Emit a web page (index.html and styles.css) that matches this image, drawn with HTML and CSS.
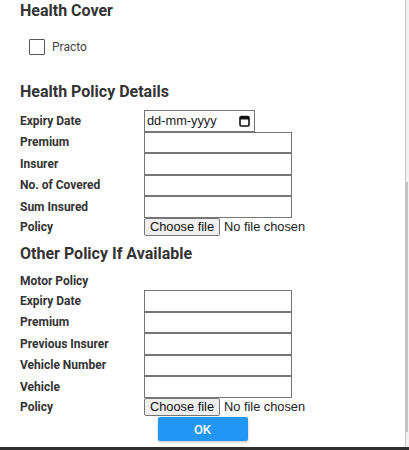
FILE: index.html
```html
<!DOCTYPE html>
<html>
<head>
<meta charset="utf-8">
<link rel="stylesheet" href="styles.css">
</head>
<body>
<div class="window">
  <div class="content">
    <h2 class="title first">Health Cover</h2>
    <label class="check"><input type="checkbox" class="box"><span>Practo</span></label>

    <h2 class="title">Health Policy Details</h2>
    <div class="form">
      <span class="lbl">Expiry Date</span>
      <div class="date"><span class="ph">dd-mm-yyyy</span><svg class="cal" width="11" height="12" viewBox="0 0 11 12"><rect x="1" y="1.5" width="9" height="9.5" rx="1.2" fill="none" stroke="#111" stroke-width="1.6"/><rect x="1" y="1.5" width="9" height="3" fill="#111"/></svg></div>
      <span class="lbl">Premium</span><input type="text" class="txt">
      <span class="lbl">Insurer</span><input type="text" class="txt">
      <span class="lbl">No. of Covered</span><input type="text" class="txt">
      <span class="lbl">Sum Insured</span><input type="text" class="txt">
      <span class="lbl">Policy</span>
      <div class="file"><span class="choose">Choose file</span><span class="nofile">No file chosen</span></div>
    </div>

    <h2 class="title">Other Policy If Available</h2>
    <div class="form">
      <span class="lbl full">Motor Policy</span>
      <span class="lbl">Expiry Date</span><input type="text" class="txt">
      <span class="lbl">Premium</span><input type="text" class="txt">
      <span class="lbl">Previous Insurer</span><input type="text" class="txt">
      <span class="lbl">Vehicle Number</span><input type="text" class="txt">
      <span class="lbl">Vehicle</span><input type="text" class="txt">
      <span class="lbl">Policy</span>
      <div class="file"><span class="choose">Choose file</span><span class="nofile">No file chosen</span></div>
    </div>

    <div class="actions"><button class="ok">OK</button></div>
  </div>
  <div class="scrollbar"><div class="thumb"></div></div>
</div>
<div class="strip"></div>
</body>
</html>
```
FILE: styles.css
```css
html, body {
  margin: 0;
  padding: 0;
  background: #ffffff;
}
body {
  font-family: Roboto, "Liberation Sans", sans-serif;
  color: #333333;
  width: 409px;
  height: 450px;
  overflow: hidden;
}
.window {
  display: flex;
  height: 447px;
  background: #ffffff;
}
.content {
  width: 405px;
  box-sizing: border-box;
  padding: 0 0 0 20px;
}
.title {
  font-size: 16px;
  font-weight: 700;
  line-height: 20px;
  margin: 0;
  color: #333333;
}
.title.first {
  margin-top: 1px;
}
.check {
  display: flex;
  align-items: center;
  margin: 18px 0 0 9px;
  font-size: 12px;
  color: #444444;
  height: 16px;
}
.box {
  appearance: none;
  -webkit-appearance: none;
  width: 16px;
  height: 16px;
  margin: 0 7px 0 0;
  border: 1px solid #555555;
  border-radius: 1px;
  box-sizing: border-box;
  background: #fff;
}
.check + .title {
  margin-top: 27px;
}
.form {
  display: grid;
  grid-template-columns: 124px auto;
  align-items: center;
  margin-top: 8px;
}
.lbl {
  font-size: 12px;
  font-weight: 700;
  color: #333333;
}
.lbl.full {
  grid-column: 1 / 3;
  height: 18px;
  line-height: 18px;
}
.txt, .date {
  font-family: "Liberation Sans", Arial, sans-serif;
  font-size: 12.8px;
  box-sizing: border-box;
  height: 21.5px;
  margin: 0;
  padding: 1px 2px;
  border: 1px solid #767676;
  border-radius: 0;
  background: #fff;
  outline: none;
}
.txt {
  width: 148px;
}
.date {
  width: 111px;
  color: #1a1a1a;
  display: flex;
  align-items: center;
  justify-content: space-between;
  padding: 0 4px 0 2px;
}
.ph {
  line-height: 15px;
}
.cal {
  display: block;
}
.file {
  display: flex;
  align-items: center;
  height: 18.5px;
  font-family: "Liberation Sans", Arial, sans-serif;
  font-size: 12.8px;
  color: #111;
}
.choose {
  box-sizing: border-box;
  width: 76px;
  height: 18.5px;
  line-height: 16px;
  text-align: center;
  background: #efefef;
  border: 1px solid #767676;
  border-radius: 2px;
  margin-right: 4px;
}
.nofile {
  color: #222;
}
.form + .title {
  margin-top: 8px;
}
.actions {
  display: flex;
  justify-content: center;
  margin: 1px 0 0 -20px;
}
.ok {
  width: 90px;
  height: 24px;
  border: none;
  border-radius: 2px;
  background: #2196f3;
  color: #ffffff;
  font-family: Roboto, sans-serif;
  font-size: 13px;
  font-weight: 500;
  box-shadow: 0 1px 3px rgba(0, 0, 0, 0.25);
}
.scrollbar {
  width: 4px;
  border-left: 1px solid #c8c8c8;
  background: #f1f1f1;
  display: flex;
  flex-direction: column;
  padding-top: 182px;
  box-sizing: border-box;
}
.thumb {
  width: 2px;
  height: 250px;
  background: #c1c1c1;
}
.strip {
  height: 3px;
  background: #2e2e2e;
}
```
